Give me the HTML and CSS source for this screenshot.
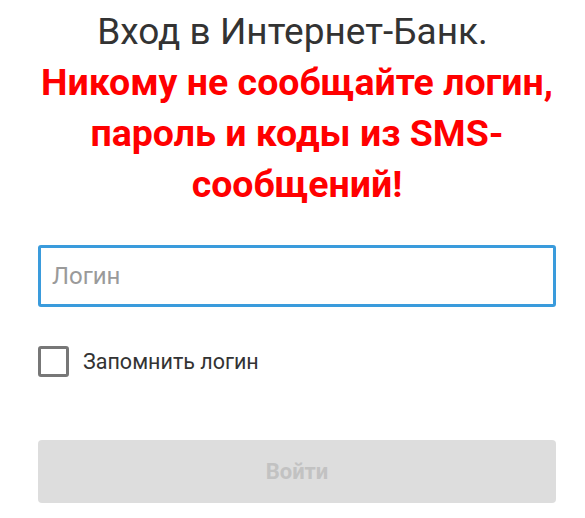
FILE: index.html
```html
<!DOCTYPE html>
<html lang="ru">
<head>
<meta charset="utf-8">
<link rel="stylesheet" href="styles.css">
</head>
<body>
<div class="page">
  <h1 class="title">Вход в Интернет-Банк.</h1>
  <div class="content">
    <p class="warning">Никому не сообщайте логин, пароль и коды из SMS-сообщений!</p>
    <form class="form">
      <input class="login" type="text" placeholder="Логин">
      <label class="remember">
        <span class="box"></span>
        <span class="remember-text">Запомнить логин</span>
      </label>
      <button class="submit" type="button">Войти</button>
    </form>
  </div>
</div>
</body>
</html>
```
FILE: styles.css
```css
html, body {
  margin: 0;
  padding: 0;
  background: #fff;
}
.page {
  width: 585px;
  font-family: Roboto, "Liberation Sans", sans-serif;
  padding-top: 10px;
}
.title {
  margin: 0;
  text-align: center;
  font-size: 37px;
  font-weight: 400;
  color: #333;
  line-height: 44px;
}
.content {
  padding: 0 29px 0 38px;
}
.warning {
  margin: 3px 0 0;
  text-align: center;
  color: #ff0000;
  font-size: 37.5px;
  font-weight: 700;
  line-height: 51px;
}
.form {
  padding-top: 35px;
  display: flex;
  flex-direction: column;
}
.login {
  box-sizing: border-box;
  height: 62px;
  border: 3px solid #3a9bdc;
  border-radius: 3px;
  padding: 0 11px;
  font-family: Roboto, "Liberation Sans", sans-serif;
  font-size: 24px;
  color: #333;
  outline: none;
}
.login::placeholder {
  color: #9a9a9a;
}
.remember {
  display: flex;
  align-items: center;
  margin-top: 39px;
  gap: 14px;
}
.box {
  box-sizing: border-box;
  width: 31px;
  height: 31px;
  border: 3px solid #777;
  border-radius: 3px;
}
.remember-text {
  font-size: 21.5px;
  color: #333;
}
.submit {
  margin-top: 63px;
  height: 63px;
  border: none;
  border-radius: 4px;
  background: #dddddd;
  color: #c2c2c2;
  font-family: Roboto, "Liberation Sans", sans-serif;
  font-size: 22px;
  font-weight: 700;
}
```
